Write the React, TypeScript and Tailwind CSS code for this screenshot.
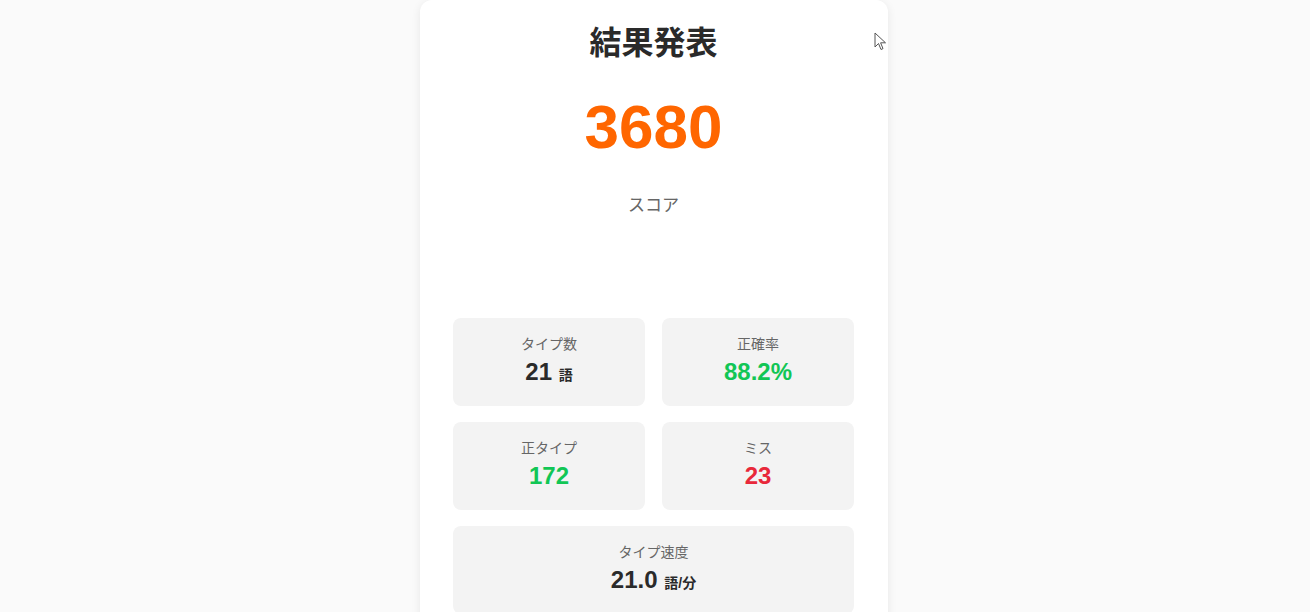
import React from "react";

const font = { fontFamily: '"Liberation Sans", Arial, "Noto Sans CJK JP", sans-serif' };

function Stat({ label, children, wide }: { label: string; children: React.ReactNode; wide?: boolean }) {
  return (
    <div className={`bg-[#f3f3f3] rounded-lg p-4 text-center ${wide ? "col-span-2" : ""}`}>
      <div className="text-sm leading-5 text-[#666666]">{label}</div>
      <div className="text-2xl leading-9 font-bold text-[#2a2a2a]">{children}</div>
    </div>
  );
}

export default function App() {
  return (
    <div className="min-h-screen bg-[#fafafa] flex justify-center pr-[2px]" style={font}>
      <div className="relative w-[468px] bg-white rounded-xl shadow-[0_2px_10px_rgba(0,0,0,0.08)] pl-[33px] pr-[34px] pt-[23px] pb-6">
        <h1 className="text-center text-[32px] leading-10 font-bold text-[#2a2a2a]">結果発表</h1>
        <div className="mt-8 text-center text-[62px] leading-[64px] font-bold text-[#ff6600]">3680</div>
        <div className="mt-[35px] text-center text-[17px] leading-6 text-[#666666]">スコア</div>
        <div className="mt-[100px] grid grid-cols-2 gap-x-[17px] gap-y-4">
          <Stat label="タイプ数">
            21 <span className="text-sm">語</span>
          </Stat>
          <Stat label="正確率">
            <span className="text-[#11c655]">88.2%</span>
          </Stat>
          <Stat label="正タイプ">
            <span className="text-[#11c655]">172</span>
          </Stat>
          <Stat label="ミス">
            <span className="text-[#e8283a]">23</span>
          </Stat>
          <Stat label="タイプ速度" wide>
            21.0 <span className="text-sm">語/分</span>
          </Stat>
        </div>
        <svg className="absolute left-[454px] top-[32px]" width="13" height="20" viewBox="0 0 13 20">
          <path d="M1 1 L1 15 L4.5 11.5 L7 17.5 L9 16.6 L6.6 10.8 L11.5 10.8 Z" fill="white" stroke="#555" strokeWidth="1" strokeLinejoin="round" />
        </svg>
      </div>
    </div>
  );
}
